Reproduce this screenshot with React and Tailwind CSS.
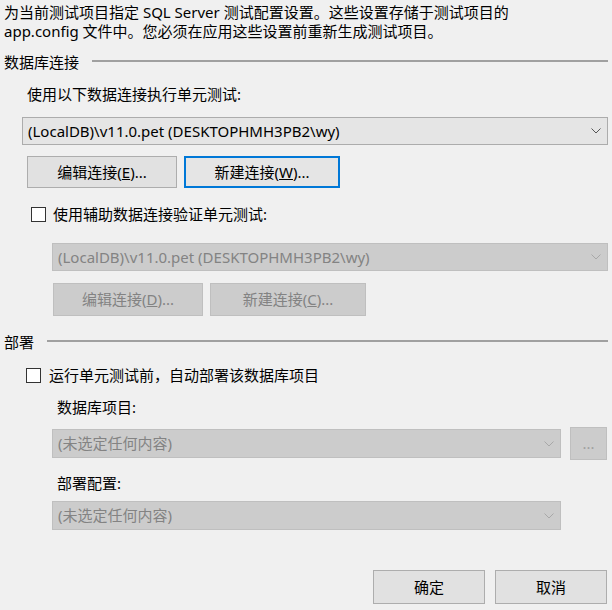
import React from "react";

const FONT = { fontFamily: '"Segoe UI", "Noto Sans", "Noto Sans CJK SC", sans-serif' };

const Chevron = ({ disabled }) => (
  <svg width="10" height="6" viewBox="0 0 10 6" className="shrink-0">
    <path
      d="M0.5 0.5 L5 5 L9.5 0.5"
      fill="none"
      stroke={disabled ? "#a8a8a8" : "#555555"}
      strokeWidth="1"
    />
  </svg>
);

const Combo = ({ text, disabled, className = "" }) => (
  <div
    className={
      "flex items-center justify-between pl-[5px] pr-[6px] border " +
      (disabled
        ? "bg-[#cccccc] border-[#bfbfbf] text-[#838383] "
        : "bg-[#e5e5e5] border-[#acacac] text-black ") +
      className
    }
  >
    <span className="truncate">{text}</span>
    <Chevron disabled={disabled} />
  </div>
);

const Btn = ({ children, disabled, focused, className = "" }) => (
  <div
    className={
      "flex items-center justify-center " +
      (focused
        ? "border-2 border-[#0078d7] bg-[#e5e5e5] "
        : disabled
        ? "border border-[#bfbfbf] bg-[#cccccc] text-[#838383] "
        : "border border-[#adadad] bg-[#e1e1e1] ") +
      className
    }
  >
    {children}
  </div>
);

const Check = ({ className = "" }) => (
  <div className={"border border-[#333333] bg-white shrink-0 " + className}></div>
);

const Section = ({ title, className = "" }) => (
  <div className={"flex items-center h-[20px] " + className}>
    <span className="pl-[4px]">{title}</span>
    <div className="flex-1 h-[2px] bg-[#a0a0a0] ml-[13px] mr-[4px] -mt-[2px]"></div>
  </div>
);

export default function App() {
  return (
    <div
      className="w-[612px] h-[610px] bg-[#f0f0f0] text-[15px] leading-[19px] text-black flex flex-col overflow-hidden"
      style={FONT}
    >
      <p className="pl-[4px] pt-[3px]">
        为当前测试项目指定 SQL Server 测试配置设置。这些设置存储于测试项目的
        <br />
        app.config 文件中。您必须在应用这些设置前重新生成测试项目。
      </p>

      <Section title="数据库连接" className="mt-[11px]" />

      <div className="pl-[27px] mt-[13px] h-[19px]">使用以下数据连接执行单元测试:</div>

      <Combo
        text="(LocalDB)\v11.0.pet (DESKTOPHMH3PB2\wy)"
        className="ml-[22px] mr-[4px] mt-[13px] h-[28px]"
      />

      <div className="flex ml-[27px] mt-[11px] gap-[7px] h-[32px]">
        <Btn className="w-[150px]">
          编辑连接(<span className="underline">E</span>)...
        </Btn>
        <Btn focused className="w-[156px]">
          新建连接(<span className="underline">W</span>)...
        </Btn>
      </div>

      <div className="flex items-center ml-[31px] mt-[17px] h-[19px]">
        <Check className="w-[15px] h-[15px]" />
        <span className="ml-[7px]">使用辅助数据连接验证单元测试:</span>
      </div>

      <Combo
        disabled
        text="(LocalDB)\v11.0.pet (DESKTOPHMH3PB2\wy)"
        className="ml-[52px] mr-[4px] mt-[19px] h-[28px]"
      />

      <div className="flex ml-[53px] mt-[12px] gap-[7px] h-[33px]">
        <Btn disabled className="w-[150px]">
          编辑连接(<span className="underline">D</span>)...
        </Btn>
        <Btn disabled className="w-[156px]">
          新建连接(<span className="underline">C</span>)...
        </Btn>
      </div>

      <Section title="部署" className="mt-[16px]" />

      <div className="flex items-center ml-[26px] mt-[14px] h-[19px]">
        <Check className="w-[15px] h-[15px]" />
        <span className="ml-[8px]">运行单元测试前，自动部署该数据库项目</span>
      </div>

      <div className="ml-[57px] mt-[13px] h-[19px]">数据库项目:</div>

      <div className="flex items-center ml-[52px] mr-[4px] mt-[10px] h-[33px]">
        <Combo disabled text="(未选定任何内容)" className="w-[509px] h-[29px]" />
        <Btn disabled className="ml-[9px] w-[37px] h-[33px] text-[#a0a0a0]">
          ...
        </Btn>
      </div>

      <div className="ml-[57px] mt-[14px] h-[19px]">部署配置:</div>

      <Combo
        disabled
        text="(未选定任何内容)"
        className="ml-[52px] w-[509px] mt-[8px] h-[29px]"
      />

      <div className="flex justify-end gap-[10px] mr-[5px] mt-[40px]">
        <Btn className="w-[112px] h-[34px]">确定</Btn>
        <Btn className="w-[112px] h-[34px]">取消</Btn>
      </div>
    </div>
  );
}
